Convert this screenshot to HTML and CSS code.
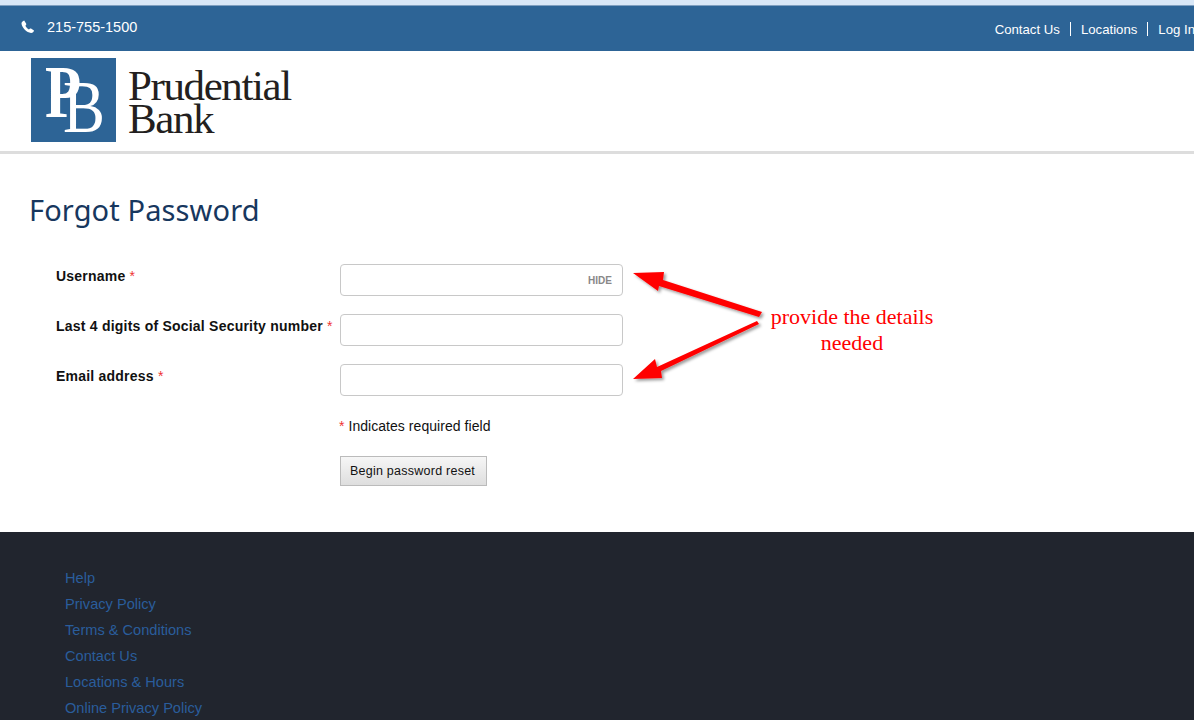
FILE: index.html
```html
<!DOCTYPE html>
<html lang="en">
<head>
    <meta charset="UTF-8">
    <meta name="viewport" content="width=device-width, initial-scale=1.0">
    <title>Forgot Password</title>
    <link rel="stylesheet" href="styles.css">
</head>
<body>

<div class="top-strip"></div>

<div class="top-bar">
    <div class="phone">
        <svg class="phone-icon" viewBox="0 0 14 14" width="14" height="14">
            <path d="M3.2 0.5 L5.2 3.7 C5.4 4.2 5.3 4.7 5 5 L4.4 5.7 C5 7.2 6.3 8.6 7.9 9.5 L8.8 8.7 C9.1 8.4 9.6 8.4 10 8.6 L13 10.5 C12.8 11.9 11.5 13 10 12.9 C5.7 12.4 1 7.8 0.5 3.7 C0.4 2.2 1.8 0.8 3.2 0.5 Z" fill="#fff"/>
        </svg>
        <span>215-755-1500</span>
    </div>
    <ul class="top-links">
        <li><a href="#">Contact Us</a></li>
        <li><a href="#">Locations</a></li>
        <li><a href="#">Log In</a></li>
    </ul>
</div>

<div class="logo-row">
    <div class="logo-mark">
        <span class="mark-p">P</span>
        <span class="mark-b">B</span>
    </div>
    <div class="logo-name">Prudential<br>Bank</div>
</div>

<div class="content">
    <h1>Forgot Password</h1>

    <form class="reset-form">
        <label>Username <span class="req">*</span></label>
        <div class="field">
            <input type="text">
            <span class="hide-btn">HIDE</span>
        </div>

        <label>Last 4 digits of Social Security number <span class="req">*</span></label>
        <div class="field"><input type="text"></div>

        <label>Email address <span class="req">*</span></label>
        <div class="field"><input type="text"></div>

        <div class="form-actions">
            <p class="req-note"><span class="req">*</span> Indicates required field</p>
            <button type="button" class="submit-btn">Begin password reset</button>
        </div>
    </form>

    <!-- annotation drawn on top of the form -->
    <svg class="arrows" viewBox="0 0 140 125" width="140" height="125">
        <defs>
            <filter id="arrowShadow" x="-10%" y="-10%" width="125%" height="125%">
                <feDropShadow dx="2" dy="2" stdDeviation="1.5" flood-color="#000" flood-opacity="0.4"/>
            </filter>
        </defs>
        <g fill="#f00" filter="url(#arrowShadow)">
            <path d="M0 4 L31 3 L30 11 L129 43 L126 48 L26 17 L25 22 Z"/>
            <path d="M0 110 L22 90 L24 98 L124 52 L126 55 L28 102 L29 109 Z"/>
        </g>
    </svg>
    <div class="note">provide the details<br>needed</div>
</div>

<div class="footer">
    <ul class="footer-links">
        <li><a href="#">Help</a></li>
        <li><a href="#">Privacy Policy</a></li>
        <li><a href="#">Terms &amp; Conditions</a></li>
        <li><a href="#">Contact Us</a></li>
        <li><a href="#">Locations &amp; Hours</a></li>
        <li><a href="#">Online Privacy Policy</a></li>
    </ul>
</div>

</body>
</html>
```

FILE: styles.css
```css
/* Basic reset */
* {
    margin: 0;
    padding: 0;
    box-sizing: border-box;
}

html, body {
    height: 720px;
    overflow: hidden;
}

body {
    font-family: "Liberation Sans", Arial, sans-serif;
    background-color: #fff;
    color: #111;
}

/* Top bars */
.top-strip {
    height: 6px;
    background-color: #d8e7f7;
    border-bottom: 1px solid #7f9fc0;
}

.top-bar {
    height: 45px;
    background-color: #2d6496;
    color: #fff;
    display: flex;
    justify-content: space-between;
    padding-left: 21px;
}

.phone {
    display: flex;
    align-items: center;
    gap: 12px;
    height: 41px;
    font-size: 14.5px;
}

.phone-icon {
    display: block;
}

.top-links {
    list-style-type: none;
    display: flex;
    padding-top: 16px;
    margin-right: -1px;
}

.top-links li {
    height: 14px;
    line-height: 14px;
    padding: 0 10px;
    border-left: 1px solid #fff;
}

.top-links li:first-child {
    border-left: none;
}

.top-links li:last-child {
    padding-right: 0;
}

.top-links a {
    color: #fff;
    font-size: 13.2px;
    text-decoration: none;
}

/* Logo */
.logo-row {
    height: 103px;
    padding: 7px 0 0 31px;
    border-bottom: 3px solid #ddd;
    display: flex;
    align-items: flex-start;
}

.logo-mark {
    width: 85px;
    height: 84px;
    background-color: #2d6496;
    position: relative;
}

.mark-p, .mark-b {
    position: absolute;
    font-family: "Liberation Serif", serif;
    color: #fff;
    line-height: 1;
    font-size: 74px;
    transform-origin: left top;
}

.mark-p {
    left: 14px;
    top: -3px;
    font-weight: bold;
    transform: scaleX(0.8);
}

.mark-b {
    left: 32px;
    top: 12px;
    transform: scaleX(0.85);
}

.logo-name {
    font-family: "Liberation Serif", serif;
    font-size: 43px;
    line-height: 33px;
    letter-spacing: -1.4px;
    color: #231f20;
    margin: 11px 0 0 12px;
}

/* Main content */
.content {
    height: 378px;
    position: relative;
    padding: 36px 0 0 29px;
}

h1 {
    font-family: "Noto Sans", sans-serif;
    font-size: 29px;
    font-weight: 400;
    line-height: 40px;
    color: #17375e;
    letter-spacing: 0.12px;
}

.reset-form {
    display: grid;
    grid-template-columns: 284px 283px;
    row-gap: 18px;
    margin: 34px 0 0 27px;
}

.reset-form label {
    font-size: 14px;
    font-weight: bold;
    letter-spacing: 0.22px;
    line-height: 24px;
}

.req {
    color: #e33;
    font-weight: normal;
}

.field {
    position: relative;
}

.field input {
    display: block;
    width: 283px;
    height: 32px;
    border: 1px solid #c8c8c8;
    border-radius: 4px;
    background-color: #fff;
}

.hide-btn {
    position: absolute;
    top: 11px;
    right: 11px;
    font-size: 10px;
    line-height: 12px;
    font-weight: bold;
    color: #888;
}

.form-actions {
    grid-column: 2;
    display: flex;
    flex-direction: column;
    align-items: flex-start;
    gap: 18px;
}

.req-note {
    font-size: 14px;
    line-height: 24px;
    letter-spacing: 0.05px;
    margin-left: -1px;
}

.submit-btn {
    width: 147px;
    height: 30px;
    padding-right: 2px;
    font-family: "Liberation Sans", Arial, sans-serif;
    font-size: 12.5px;
    letter-spacing: 0.25px;
    color: #111;
    background: linear-gradient(#f6f6f6, #dedede);
    border: 1px solid #bbb;
}

/* Red annotation */
.arrows {
    position: absolute;
    left: 633px;
    top: 115px;
}

.note {
    position: absolute;
    left: 752px;
    top: 150px;
    width: 200px;
    font-family: "Liberation Serif", serif;
    font-size: 22px;
    line-height: 26px;
    color: #f00;
    text-align: center;
}

/* Footer */
.footer {
    background-color: #21252e;
    height: 200px;
    padding: 33px 0 0 65px;
}

.footer-links {
    list-style-type: none;
}

.footer-links li {
    height: 26px;
    line-height: 26px;
}

.footer-links a {
    color: #2a5d9c;
    font-size: 14.6px;
    text-decoration: none;
}
```
